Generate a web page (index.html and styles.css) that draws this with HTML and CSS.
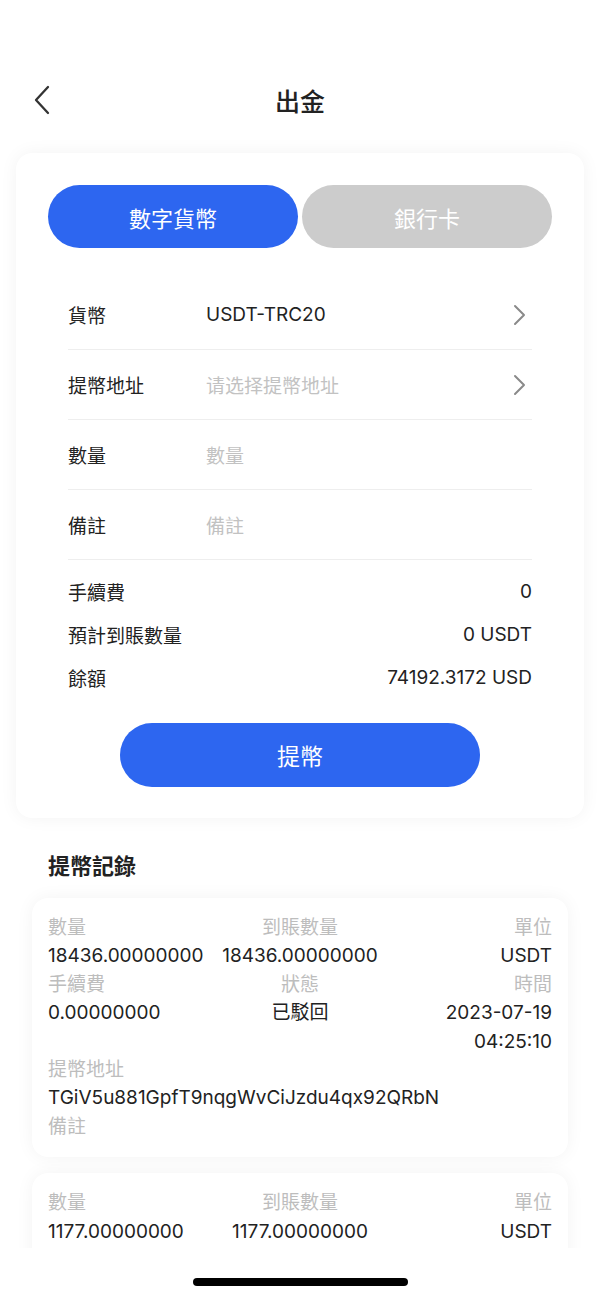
FILE: index.html
```html
<!DOCTYPE html>
<html lang="zh-Hant">
<head>
  <meta charset="UTF-8">
  <title>出金</title>
  <link rel="stylesheet" href="styles.css">
</head>
<body>

<header class="topbar">
  <button class="back-btn" title="返回">
    <svg width="20" height="30" viewBox="0 0 20 30"><polyline points="16,2 4,15 16,28" fill="none" stroke="#333" stroke-width="2.3" stroke-linecap="round" stroke-linejoin="round"/></svg>
  </button>
  <h1>出金</h1>
</header>

<main class="page">
  <section class="card">
    <div class="tabs">
      <button class="tab active">數字貨幣</button>
      <button class="tab">銀行卡</button>
    </div>

    <div class="form">
      <div class="row">
        <span class="label">貨幣</span>
        <span class="value">USDT-TRC20</span>
        <svg class="arrow" width="14" height="22" viewBox="0 0 14 22"><polyline points="3,2 12,11 3,20" fill="none" stroke="#8a8a8a" stroke-width="2" stroke-linecap="round" stroke-linejoin="round"/></svg>
      </div>
      <div class="row">
        <span class="label">提幣地址</span>
        <span class="value placeholder">请选择提幣地址</span>
        <svg class="arrow" width="14" height="22" viewBox="0 0 14 22"><polyline points="3,2 12,11 3,20" fill="none" stroke="#8a8a8a" stroke-width="2" stroke-linecap="round" stroke-linejoin="round"/></svg>
      </div>
      <div class="row">
        <span class="label">數量</span>
        <span class="value placeholder">數量</span>
      </div>
      <div class="row">
        <span class="label">備註</span>
        <span class="value placeholder">備註</span>
      </div>

      <div class="summary">
        <div class="sum-row"><span>手續費</span><span>0</span></div>
        <div class="sum-row"><span>預計到賬數量</span><span>0 USDT</span></div>
        <div class="sum-row"><span>餘額</span><span>74192.3172 USD</span></div>
      </div>
    </div>

    <button class="submit">提幣</button>
  </section>

  <h2 class="section-title">提幣記錄</h2>

  <div class="record">
    <span class="k">數量</span><span class="k c">到賬數量</span><span class="k r">單位</span>
    <span class="v">18436.00000000</span><span class="v c">18436.00000000</span><span class="v r">USDT</span>
    <span class="k">手續費</span><span class="k c">狀態</span><span class="k r">時間</span>
    <span class="v">0.00000000</span><span class="v c">已駁回</span><span class="v r">2023-07-19<br>04:25:10</span>
    <span class="k full">提幣地址</span>
    <span class="v full">TGiV5u881GpfT9nqgWvCiJzdu4qx92QRbN</span>
    <span class="k full">備註</span>
  </div>

  <div class="record">
    <span class="k">數量</span><span class="k c">到賬數量</span><span class="k r">單位</span>
    <span class="v">1177.00000000</span><span class="v c">1177.00000000</span><span class="v r">USDT</span>
    <span class="k">手續費</span><span class="k c">狀態</span><span class="k r">時間</span>
  </div>
</main>

<div class="home-bar"><span class="indicator"></span></div>

</body>
</html>
```

FILE: styles.css
```css
body {
  margin: 0;
  font-family: Inter, "Noto Sans CJK TC", sans-serif;
  background-color: #fff;
  color: #222;
  overflow: hidden;
}

.topbar {
  margin-top: 68px;
  height: 64px;
  display: flex;
  align-items: center;
  justify-content: center;
  position: relative;
}

.topbar h1 {
  margin: 0;
  font-size: 25px;
  font-weight: 500;
  color: #222;
}

.back-btn {
  position: absolute;
  left: 32px;
  top: 17px;
  background: none;
  border: none;
  padding: 0;
}

.page {
  padding: 21px 16px 0;
}

.card {
  background: #fff;
  border-radius: 16px;
  padding: 32px 32px 31px;
  box-shadow: 0 0 18px rgba(0, 0, 0, 0.05);
}

.tabs {
  display: flex;
  gap: 4px;
}

.tab {
  flex: 1;
  height: 63px;
  border: none;
  border-radius: 32px;
  background: #cccccc;
  color: #fff;
  font-family: inherit;
  font-size: 22px;
  font-weight: 400;
}

.tab.active {
  background: #2d66f0;
}

.form {
  margin: 32px 20px 0;
}

.row {
  display: flex;
  align-items: center;
  height: 69px;
  border-bottom: 1px solid #eeeeee;
  font-size: 19px;
}

.row .label {
  width: 138px;
}

.row .value {
  flex: 1;
}

.row .placeholder {
  color: #c2c2c2;
}

.row .arrow {
  margin-right: 6px;
}

.summary {
  padding-top: 10px;
}

.sum-row {
  display: flex;
  justify-content: space-between;
  align-items: center;
  height: 43px;
  font-size: 19px;
}

.submit {
  display: block;
  margin: 24px auto 0;
  width: 360px;
  height: 64px;
  border: none;
  border-radius: 32px;
  background: #2d66f0;
  color: #fff;
  font-family: inherit;
  font-size: 23px;
  font-weight: 400;
}

.section-title {
  margin: 33px 0 17px 32px;
  font-size: 22px;
  line-height: 30px;
  font-weight: 700;
}

.record {
  margin: 0 16px 16px;
  background: #fff;
  border-radius: 16px;
  padding: 16px;
  display: grid;
  grid-template-columns: 1fr 1fr 1fr;
  line-height: 28.4px;
  font-size: 19px;
  box-shadow: 0 0 18px rgba(0, 0, 0, 0.05);
}

.record .k {
  color: #bdbdbd;
}

.record .v {
  color: #222;
  white-space: nowrap;
}

.record .c {
  text-align: center;
}

.record .r {
  text-align: right;
}

.record .full {
  grid-column: 1 / 4;
}

.home-bar {
  position: fixed;
  left: 0;
  right: 0;
  bottom: 0;
  height: 50px;
  background: #fff;
  display: flex;
  justify-content: center;
}

.indicator {
  margin-top: 30px;
  width: 215px;
  height: 8px;
  border-radius: 4px;
  background: #000;
}
```
